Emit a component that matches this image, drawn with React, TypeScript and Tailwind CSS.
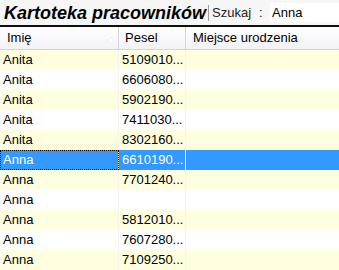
import React from "react";

const rows: { name: string; pesel: string }[] = [
  { name: "Anita", pesel: "5109010..." },
  { name: "Anita", pesel: "6606080..." },
  { name: "Anita", pesel: "5902190..." },
  { name: "Anita", pesel: "7411030..." },
  { name: "Anita", pesel: "8302160..." },
  { name: "Anna", pesel: "6610190..." },
  { name: "Anna", pesel: "7701240..." },
  { name: "Anna", pesel: "" },
  { name: "Anna", pesel: "5812010..." },
  { name: "Anna", pesel: "7607280..." },
  { name: "Anna", pesel: "7109250..." },
];

export default function App() {
  return (
    <div
      className="w-[339px] h-[270px] overflow-hidden bg-white text-[13px] text-black"
      style={{ fontFamily: '"Liberation Sans", Arial, sans-serif' }}
    >
      {/* Top bar */}
      <div className="h-[27px] flex items-center bg-[#f6f6f6] border-b-2 border-[#111]">
        <div className="pl-[4px] w-[208px] text-[18px] font-bold italic leading-none text-black whitespace-nowrap">
          Kartoteka pracowników
        </div>
        <div className="w-px h-[16px] bg-[#a0a0a0]" />
        <div className="pl-[3px] w-[50px] text-[#222] leading-none">Szukaj</div>
        <div className="w-[11px] text-[#222] leading-none">:</div>
        <div className="flex-1 h-[19px] bg-white flex items-center pl-[2px] leading-none">Anna</div>
      </div>

      {/* Header */}
      <div className="h-[23px] flex bg-gradient-to-b from-white to-[#f1f2f4] border-b border-[#d5d5d5]">
        <div className="relative w-[119px] border-r border-[#d5d5d5] flex items-center pl-[7px]">
          Imię
          <svg className="absolute left-[107px] top-[10px]" width="8" height="5" viewBox="0 0 8 5">
            <polygon points="0,5 4,0.5 8,5" fill="#ffffff" stroke="#e2e2e2" strokeWidth="0.6" />
          </svg>
        </div>
        <div className="w-[67px] border-r border-[#d5d5d5] flex items-center pl-[6px]">Pesel</div>
        <div className="flex-1 flex items-center pl-[7px]">Miejsce urodzenia</div>
      </div>

      {/* Rows */}
      <div className="flex flex-col">
        {rows.map((r, i) => {
          const selected = i === 5;
          const bg = selected ? "bg-[#3399ff] text-white" : i % 2 === 0 ? "bg-[#ffffe0]" : "bg-white";
          return (
            <div key={i} className={`h-[20px] flex ${bg}`}>
              <div
                className={`w-[119px] border-r border-[#f4f4f4] flex items-center pl-[3px] ${
                  selected ? "outline-1 outline-dotted outline-black -outline-offset-1" : ""
                }`}
              >
                {r.name}
              </div>
              <div className="w-[67px] border-r border-[#f4f4f4] flex items-center pl-[3px] whitespace-nowrap overflow-hidden">
                {r.pesel}
              </div>
              <div className="flex-1" />
            </div>
          );
        })}
      </div>
    </div>
  );
}
